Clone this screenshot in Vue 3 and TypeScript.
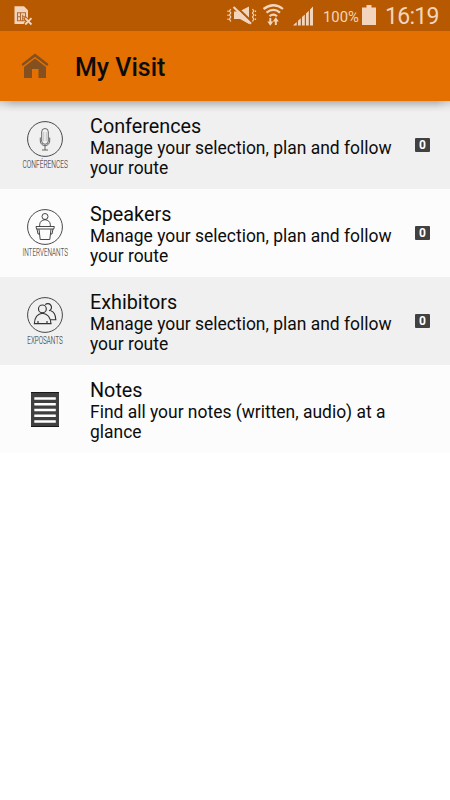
<script setup lang="ts">
interface VisitItem {
  id: 'conferences' | 'speakers' | 'exhibitors' | 'notes'
  title: string
  text: string
  count?: number
}

const items: VisitItem[] = [
  { id: 'conferences', title: 'Conferences', text: 'Manage your selection, plan and follow your route', count: 0 },
  { id: 'speakers', title: 'Speakers', text: 'Manage your selection, plan and follow your route', count: 0 },
  { id: 'exhibitors', title: 'Exhibitors', text: 'Manage your selection, plan and follow your route', count: 0 },
  { id: 'notes', title: 'Notes', text: 'Find all your notes (written, audio) at a glance' },
]
</script>

<template>
  <div class="screen">
    <div class="status">
      <svg class="sim" width="20" height="20" viewBox="0 0 20 20">
        <path d="M0.500 0.300h9.500l4 4v13.700H0.500z" fill="#f3d5bd" />
        <path d="M3.500 6.700h8v8h-8zM3.500 10.700h3M8.500 10.700h3M6.500 6.700v8M8.700 8.700v6" fill="none" stroke="#b06a33" stroke-width="1.100" />
        <path d="M10.500 11.500l7 7M18 11.500l-7 7" stroke="#b85a00" stroke-width="3.800" />
        <path d="M11.200 12.200l6.300 6.300M17.500 12.200l-6.300 6.300" stroke="#f3d5bd" stroke-width="1.800" />
      </svg>
      <svg class="signals" width="88" height="24" viewBox="0 0 88 24" fill="#f3d5bd">
        <path d="M7 7.500h5L22 2.500v17.500l-9-5H7z" />
        <path d="M8 1.500L25 18" stroke="#b65900" stroke-width="2.400" />
        <path d="M6.500 3L24 19.700" stroke="#f3d5bd" stroke-width="2.200" />
        <path d="M3.800 5L2.500 7l1.300 2-1.300 2 1.300 2-1.300 2 1.300 2.500M1 6.500V8M1 10.500V12M1 14.500V16M25.500 5l1.300 2-1.300 2 1.300 2-1.300 2 1.300 2-1.300 2.500M28.500 6.500V8M28.500 10.500V12M28.500 14.500V16" fill="none" stroke="#f3d5bd" stroke-width="1.200" />
        <path d="M36.500 5q10-7.500 19.500 0M39.500 8.700q7-5.500 13.500 0M42.500 12.200q4-3.200 7.500 0" fill="none" stroke="#f3d5bd" stroke-width="2.200" />
        <path d="M43.300 14v6M48.800 15v6" stroke="#f3d5bd" stroke-width="1.900" />
        <path d="M40.300 17.500h6l-3 4.200zM45.800 17.500h6l-3-4.200z" />
        <path d="M66 21.500L69.700 18v3.500zM71 21.500v-4.700l2.800-2.600v7.300zM75 21.500v-8.500l2.800-2.600v11.100zM79 21.500V9.400l2.800-2.600v14.700zM83 21.500V5.500L86 2.500v19z" />
      </svg>
      <span class="percent">100%</span>
      <svg class="battery" width="14" height="20" viewBox="0 0 14 20"><path d="M0 2.500h4.500V0h5v2.500H14V20H0z" fill="#f3d5bd" /></svg>
      <span class="clock">16:19</span>
    </div>

    <header class="bar">
      <svg class="home" width="28" height="26" viewBox="0 0 28 26" fill="#84501f">
        <path d="M0.500 11L14 .500l13.500 10.500-1.300 2L14 3.700 1.800 13z" />
        <path d="M3 14L14 5.500 25 14v11h-7.500v-9h-6.500v9H3z" />
      </svg>
      <h1>My Visit</h1>
    </header>

    <main class="list">
      <section v-for="item in items" :key="item.id" class="row">
        <svg class="icon" width="90" height="88" viewBox="0 0 90 88">
          <g v-if="item.id !== 'notes'" fill="none" stroke="#333" stroke-width="0.9">
            <circle cx="45" cy="38" r="17.400" />
            <g v-if="item.id === 'conferences'" stroke="#555">
              <rect x="41.700" y="27.500" width="6.600" height="15.800" rx="3.300" />
              <path d="M43.700 31v9M46.300 31v9" stroke-width="0.3" />
              <path d="M40.300 36.500V40a4.700 4.700 0 0 0 9.400 0v-3.500M45 45v4M42 49h6" />
            </g>
            <g v-else-if="item.id === 'speakers'">
              <circle cx="45" cy="27.500" r="3" />
              <path d="M39.700 37.300v-2q.5-4 5.300-4.600 4.800.6 5.300 4.600v2M36 37.500h18.300l-.5 2.500h-17.300zM39 40.200l1.200 10.300h9.600L51 40.200M37 40l1 5h1.300M53 40l-1 5h-1.300" />
            </g>
            <g v-else stroke-width="1.150">
              <circle cx="42.400" cy="31.900" r="3.900" />
              <path d="M34.400 46.600q.4-9.400 8.100-10.300 7.700.9 8.500 10.300zM38 44v2.500M47 44v2.500" />
              <path d="M45.200 27.700a3.700 3.700 0 1 1 3.900 6.100M50.800 33.800q4.700 1.500 5 8.900h-5.500" />
            </g>
          </g>
          <g transform="scale(1 1.14)">
            <text v-if="item.id === 'conferences'" class="caption" x="22.500" y="59" textLength="45.500" lengthAdjust="spacingAndGlyphs">CONFÉRENCES</text>
            <text v-else-if="item.id === 'speakers'" class="caption" x="22.500" y="59" textLength="45.500" lengthAdjust="spacingAndGlyphs">INTERVENANTS</text>
            <text v-else-if="item.id === 'exhibitors'" class="caption" x="27.300" y="59" textLength="35.500" lengthAdjust="spacingAndGlyphs">EXPOSANTS</text>
          </g>
          <g v-if="item.id === 'notes'">
            <rect x="31" y="27" width="28" height="35" fill="#404040" />
            <path d="M31 27.500h28M31 61.500h28" stroke="#181818" />
            <path d="M34.300 33.500h21.500M34.300 39.200h21.500M34.300 45h21.500M34.300 50.700h21.500M34.300 56.500h21.500" stroke="#fff" stroke-width="2.600" />
          </g>
        </svg>
        <div class="copy">
          <h2>{{ item.title }}</h2>
          <p>{{ item.text }}</p>
        </div>
        <span v-if="item.count !== undefined" class="badge">{{ item.count }}</span>
      </section>
    </main>
  </div>
</template>

<style>
body {
  background: #fff;
}
</style>

<style scoped>
.screen {
  width: 450px;
  height: 800px;
  overflow: hidden;
  background: #fff;
  color: #0c0c0c;
  font-family: Roboto, "Liberation Sans", sans-serif;
}
.status {
  display: flex;
  height: 31px;
  box-sizing: border-box;
  background: #b65900;
  color: #f3d5bd;
}
.sim {
  margin: 6px 0 0 14px;
}
.signals {
  margin: 4px 0 0 193px;
}
.percent {
  width: 37px;
  margin: 7px 0 0 8px;
  font-size: 14.8px;
  line-height: 20px;
  white-space: nowrap;
}
.battery {
  margin: 5px 0 0 2px;
}
.clock {
  margin: 3px 0 0 9px;
  font-size: 23px;
  line-height: 28px;
  letter-spacing: -0.7px;
  white-space: nowrap;
}
.bar {
  position: relative;
  display: flex;
  align-items: center;
  height: 70px;
  background: #e37000;
}
.bar::after {
  content: "";
  position: absolute;
  top: 100%;
  left: 0;
  width: 100%;
  height: 11px;
  background:
    linear-gradient(to right, rgba(240, 240, 240, 0.5), rgba(240, 240, 240, 0) 14px, rgba(240, 240, 240, 0) 436px, rgba(240, 240, 240, 0.5)),
    linear-gradient(to bottom, #b3b3b3, #cacaca 30%, #e3e3e3 65%, #f0f0f0);
}
.home {
  margin: 0 0 1px 21px;
}
h1 {
  margin: 4px 0 0 26px;
  font-size: 25px;
  line-height: 32px;
  font-weight: 500;
}
.row {
  display: flex;
  height: 88px;
  background: #fcfcfc;
}
.row:nth-child(odd) {
  background: #f0f0f0;
}
.icon {
  flex: none;
}
.caption {
  font-family: Roboto, "Liberation Sans", sans-serif;
  font-size: 9px;
  font-weight: 300;
  fill: #222;
}
.copy {
  width: 310px;
  padding-top: 14px;
}
h2 {
  margin: 0;
  font-size: 19.8px;
  line-height: 23px;
  font-weight: 400;
}
p {
  margin: 0;
  font-size: 17.45px;
  line-height: 20px;
}
.badge {
  align-self: center;
  width: 15px;
  height: 14px;
  margin: 0 0 0 15px;
  border-radius: 1px;
  background: #414141;
  color: #fff;
  font-size: 12px;
  line-height: 14.5px;
  font-weight: 700;
  text-align: center;
}
</style>
